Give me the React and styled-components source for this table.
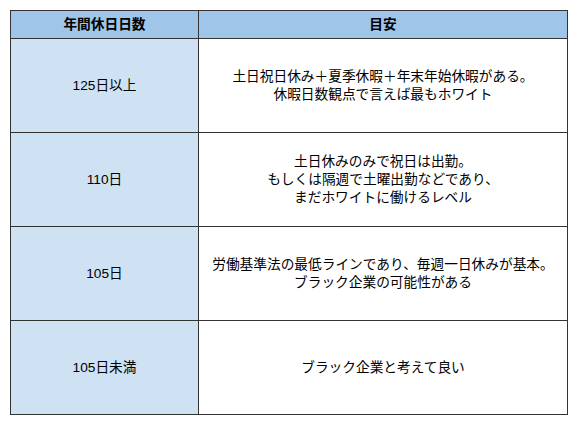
import React from "react";
import styled, { createGlobalStyle } from "styled-components";

const Global = createGlobalStyle`
  html, body { margin: 0; padding: 0; background: #fff; }
  body { font-family: "Liberation Sans", Arial, "Noto Sans CJK JP", sans-serif; color: #000; }
`;

const Page = styled.div`
  padding: 10px;
`;

const Table = styled.table`
  border-collapse: collapse;
  width: 558px;
  font-size: 13.7px;
  line-height: 18px;
`;

const HeadCell = styled.th`
  background: #9fc5e8;
  border: 1px solid #333;
  height: 27px;
  padding: 0;
  font-weight: bold;
  text-align: center;
  width: ${(p) => p.$w || "auto"};
`;

const LabelCell = styled.td`
  background: #cfe2f3;
  border: 1px solid #333;
  height: 93px;
  padding: 0;
  text-align: center;
  vertical-align: middle;
`;

const TextCell = styled.td`
  background: #fff;
  border: 1px solid #333;
  height: 93px;
  padding: 0;
  text-align: center;
  vertical-align: middle;
`;

const rows = [
  ["125日以上", ["土日祝日休み＋夏季休暇＋年末年始休暇がある。", "休暇日数観点で言えば最もホワイト"]],
  ["110日", ["土日休みのみで祝日は出勤。", "もしくは隔週で土曜出勤などであり、", "まだホワイトに働けるレベル"]],
  ["105日", ["労働基準法の最低ラインであり、毎週一日休みが基本。", "ブラック企業の可能性がある"]],
  ["105日未満", ["ブラック企業と考えて良い"]],
];

export default function App() {
  return (
    <Page>
      <Global />
      <Table>
        <thead>
          <tr>
            <HeadCell $w="187px">年間休日日数</HeadCell>
            <HeadCell>目安</HeadCell>
          </tr>
        </thead>
        <tbody>
          {rows.map(([label, lines]) => (
            <tr key={label}>
              <LabelCell>{label}</LabelCell>
              <TextCell>
                {lines.map((l, i) => (
                  <React.Fragment key={i}>
                    {i > 0 && <br />}
                    {l}
                  </React.Fragment>
                ))}
              </TextCell>
            </tr>
          ))}
        </tbody>
      </Table>
    </Page>
  );
}
